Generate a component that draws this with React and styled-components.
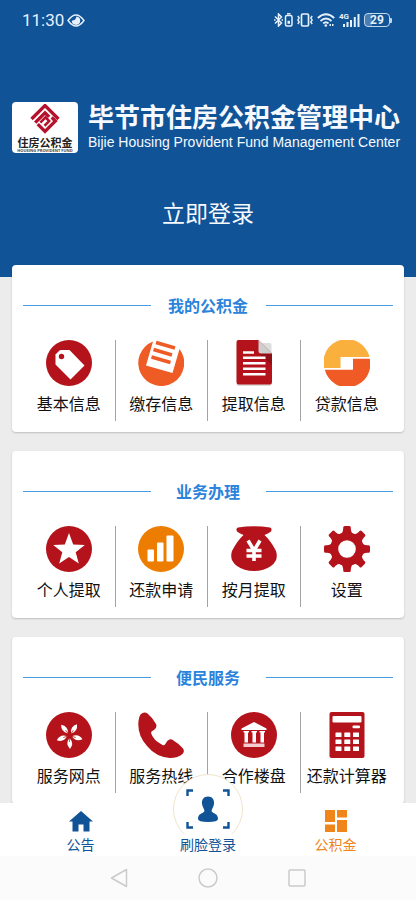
import React from "react";
import styled, { createGlobalStyle } from "styled-components";

const BLUE = "#105397";
const RED = "#b4131b";
const ORANGE = "#f08519";

const GlobalStyle = createGlobalStyle`
    * {
        box-sizing: border-box;
    }

    body {
        margin: 0;
        background: #ececec;
        font-family: "Noto Sans CJK SC", sans-serif;
        color: #111;
    }

    h1, h2, p {
        margin: 0;
    }

    button {
        border: 0;
        padding: 0;
        background: none;
        font: inherit;
        color: inherit;
        cursor: pointer;
    }

    svg {
        display: block;
        flex: none;
    }
`;

const Screen = styled.div`
    display: flex;
    flex-direction: column;
    height: 100vh;
`;

const Content = styled.main`
    flex: 1;
    min-height: 0;
    overflow-y: auto;
    scrollbar-width: none;
`;

const Hero = styled.header`
    display: flex;
    flex-direction: column;
    height: 277px;
    background: ${BLUE};
    color: #f6faff;
`;

const StatusBar = styled.div`
    display: flex;
    justify-content: space-between;
    align-items: center;
    height: 40px;
    padding: 0 24px 0 22px;
    color: #e6f1fb;
`;

const StatusGroup = styled.div`
    display: flex;
    align-items: center;
    gap: ${(props) => props.$gap}px;
`;

const Clock = styled.time`
    font: 400 17px/20px Roboto, sans-serif;
`;

const Network = styled.div`
    display: flex;
    align-items: flex-end;
`;

const NetworkType = styled.span`
    align-self: flex-start;
    margin-right: -6px;
    font: 700 8px/8px Roboto, sans-serif;
`;

const Battery = styled.span`
    display: flex;
    align-items: center;

    &::after {
        content: "";
        width: 2px;
        height: 5px;
        background: #c3d7ea;
        border-radius: 0 1px 1px 0;
    }
`;

const BatteryLevel = styled.span`
    width: 26px;
    border: 1px solid #c3d7ea;
    border-radius: 4px;
    background: linear-gradient(90deg, #4b7fb3 29%, transparent 29%);
    font: 700 12px/12px Roboto, sans-serif;
    text-align: center;
`;

const Brand = styled.div`
    display: flex;
    align-items: center;
    gap: 10px;
    margin: 61px 8px 0 12px;
`;

const Logo = styled.div`
    display: flex;
    flex-direction: column;
    align-items: center;
    flex: none;
    width: 66px;
    height: 51px;
    padding-top: 2px;
    border-radius: 4px;
    background: #fff;
`;

const LogoName = styled.span`
    margin-top: 2px;
    font-size: 11px;
    line-height: 12px;
    font-weight: 700;
    color: #222;
`;

const LogoCaption = styled.span`
    font: 700 4px/5px "Open Sans", sans-serif;
    color: #444;
    white-space: nowrap;
`;

const BrandText = styled.div`
    white-space: nowrap;
`;

const BrandName = styled.h1`
    font-size: 26px;
    line-height: 30px;
    font-weight: 700;
`;

const BrandEnglish = styled.p`
    font: 400 14px/22px "Liberation Sans", sans-serif;
`;

const LoginButton = styled.button`
    align-self: center;
    margin-top: 42px;
    font-size: 23px;
    line-height: 34px;
`;

const Cards = styled.div`
    display: flex;
    flex-direction: column;
    gap: 19px;
    margin-top: -12px;
    padding: 0 12px;
`;

const Card = styled.section`
    padding: 28px 11px 11px;
    border-radius: 4px;
    background: #fff;
    box-shadow: 0 1px 2px rgba(0, 0, 0, 0.2);
`;

const CardTitle = styled.h2`
    display: flex;
    align-items: center;
    font-size: 16px;
    line-height: 24px;
    font-weight: 700;
    color: #2b83dc;

    &::before,
    &::after {
        content: "";
        flex: 1;
        height: 1px;
        background: #4a9be0;
    }

    span {
        width: 115px;
        text-align: center;
    }
`;

const Services = styled.div`
    display: grid;
    grid-template-columns: repeat(4, 1fr);
    margin-top: 23px;
`;

const Service = styled.button`
    display: flex;
    flex-direction: column;
    align-items: center;
    gap: 5px;
    height: 81px;
    font-size: 16px;
    line-height: 24px;
    white-space: nowrap;

    &:not(:last-child) {
        border-right: 1px solid #a3a3a3;
    }
`;

const TabBar = styled.nav`
    position: relative;
    display: grid;
    grid-template-columns: 161px 1fr 161px;
    height: 53px;
    background: #fff;
`;

const Tab = styled.a`
    display: flex;
    flex-direction: column;
    align-items: center;
    justify-content: flex-end;
    gap: 2px;
    padding-bottom: 1px;
    font-size: 14px;
    line-height: 21px;
    text-decoration: none;
    color: ${(props) => (props.$active ? ORANGE : BLUE)};
`;

const TabLabel = styled.span`
    position: relative;
    background: #fff;
`;

// round button that rises above the bar
const FaceCircle = styled.span`
    position: absolute;
    left: 50%;
    bottom: 12px;
    display: flex;
    justify-content: center;
    width: 70px;
    height: 70px;
    margin-left: -35px;
    padding-top: 14px;
    border: 1px solid #efe3cc;
    border-radius: 50%;
    background: #fff;
`;

const SystemBar = styled.div`
    display: flex;
    justify-content: center;
    align-items: center;
    gap: 70px;
    height: 44px;
    background: #fbfbfb;
`;

const Disc = ({ fill = RED, children }) => (
    <svg width="46" height="46" viewBox="0 0 46 46">
        <circle cx="23" cy="23" r="23" fill={fill} />
        {children}
    </svg>
);

const TagIcon = () => (
    <Disc>
        <path
            d="M9.500 14.500L13.500 10.500Q14 10 15 10H23.500L38.500 25.500L24.500 39.500L9.500 24.500Z"
            fill="#fff"
        />
        <circle cx="15.500" cy="16.500" r="2.700" fill={RED} />
    </Disc>
);

const BillIcon = () => (
    <svg width="46" height="46" viewBox="0 0 46 46">
        <path
            d="M15 1.500A23 23 0 1 0 41.500 9L34.500 33L8 25.500Z"
            fill="#ef5b25"
        />
        <path
            d="M18 2.500L37 8M15.500 9.500L34 15M13.500 17L32.500 22.500"
            stroke="#ef5b25"
            strokeWidth="3.500"
        />
    </svg>
);

const DocumentIcon = () => (
    <svg width="46" height="46" viewBox="0 0 46 46">
        <rect x="5.500" y="3" width="35" height="43" rx="2" fill="#ddd" />
        <path d="M7 0H27.500L41 13.500V42Q41 44.500 39 44.500H7.500Q5.500 44.500 5.500 42V2Q5.500 0 7.500 0Z" fill={RED} />
        <path d="M28 13.500H41V25Z" fill="#8f1017" />
        <path d="M27.500 0V11Q27.500 13.500 30 13.500H41Z" fill="#cecece" />
        <path
            d="M12 12.500H23M12 17.800H34.500M12 23.300H34.500M12 28.800H34.500M12 34.300H34.500"
            stroke="#fff"
            strokeWidth="2.600"
        />
    </svg>
);

const LoanIcon = () => (
    <svg width="46" height="46" viewBox="0 0 46 46">
        <path d="M0 28A23 23 0 0 1 45.500 17H16.500V28Z" fill="#f9b03d" />
        <path d="M0.800 29.700H29V18.700H45.700A23 23 0 0 1 0.800 29.700Z" fill="#ef5a25" />
    </svg>
);

const StarIcon = () => (
    <Disc>
        <path
            d="M23 7L27.200 18.400L38.800 18.900L29.700 26.200L32.800 37.400L23 31L13.200 37.400L16.300 26.200L7.200 18.900L18.800 18.400Z"
            fill="#fff"
        />
    </Disc>
);

const ChartIcon = () => (
    <Disc fill="#ed7d00">
        <g fill="#fff">
            <rect x="9.500" y="23.500" width="6.500" height="12" rx="1" />
            <rect x="19" y="16.500" width="6.500" height="19" rx="1" />
            <rect x="28.500" y="9.500" width="7" height="26" rx="1" />
        </g>
    </Disc>
);

const MoneyBagIcon = () => (
    <svg width="46" height="46" viewBox="0 0 46 46">
        <path
            d="M7 1.500Q23 -1 39 1.500Q41.500 2.500 40 5.500Q38 7 33.500 9Q40 15 45 25Q48 34 40 40Q33 45 23 45Q13 45 6 40Q-2 34 1 25Q6 15 12.500 9Q8 7 6 5.500Q4.500 2.500 7 1.500Z"
            fill={RED}
        />
        <path
            d="M17 14.500L23 24.500L29 14.500M23 24V35M15.500 24.500H30.500M15.500 30H30.500"
            fill="none"
            stroke="#fff"
            strokeWidth="3.600"
        />
    </svg>
);

const GearIcon = () => (
    <svg width="46" height="46" viewBox="-23 -23 46 46">
        {[0, 45, 90, 135, 180, 225, 270, 315].map((angle) => (
            <path
                key={angle}
                d="M-6 -15Q-3.800 -17 -3.800 -20V-21.500Q-3.800 -23 -2.300 -23H2.300Q3.800 -23 3.800 -21.500V-20Q3.800 -17 6 -15Z"
                fill={RED}
                transform={`rotate(${angle})`}
            />
        ))}
        <circle r="12.800" fill="none" stroke={RED} strokeWidth="8" />
    </svg>
);

const FlowerIcon = () => (
    <Disc>
        {[36, 108, 180, 252, 324].map((angle) => (
            <g key={angle} transform={`translate(23.500 23.500) rotate(${angle})`}>
                <path d="M0 -2.500Q-5 -8 -0.500 -13.500Q4.500 -8 0 -2.500Z" fill="#fff" />
                <path d="M0 -2V-6.500" stroke={RED} strokeWidth="0.700" />
            </g>
        ))}
    </Disc>
);

const PhoneIcon = () => (
    <svg width="46" height="46" viewBox="0 0 46 46">
        <path
            d="M2.500 2.500Q6 -1 9.500 1.500Q15 6 18 12Q19.500 15.500 16 18Q13 19 13 21Q15 28 24.500 33Q26.500 34 28 31Q30.500 26.500 34 27.500Q40 31 45 36.500Q47 39.500 44.500 42Q40 46 32 46Q18 45 9 34Q-1 23 0.500 9Q1 4.500 2.500 2.500Z"
            fill={RED}
        />
    </svg>
);

const BuildingIcon = () => (
    <Disc>
        <path
            d="M23 10L35.500 16.500V18H10.500V16.500ZM12.500 19H18V20.500H17V30.500H13.500V20.500H12.500ZM20.500 19H26V20.500H25V30.500H21.500V20.500H20.500ZM28.500 19H34V20.500H33V30.500H29.500V20.500H28.500Z"
            fill="#fff"
        />
        <path d="M12.500 31.500H33.500V35H12.500Z" fill="#f3cdcf" />
    </Disc>
);

const CalculatorIcon = () => (
    <svg width="46" height="46" viewBox="0 0 46 46">
        <rect x="5.500" width="35" height="46" rx="2" fill={RED} />
        <g fill="#fff">
            <rect x="8.500" y="4" width="29" height="6.500" rx="1" />
            <rect x="28.500" y="13.500" width="7.500" height="2.700" rx="1" />
            {[20.500, 27.500, 34.500].map((y) =>
                [11.500, 20.300, 29].map((x) => (
                    <rect key={`${x}-${y}`} x={x} y={y} width="6" height="4.500" rx="0.500" />
                ))
            )}
        </g>
    </svg>
);

const FundMark = () => (
    <svg width="30" height="30" viewBox="0 0 29 29" fill="none" stroke="#b5102c" strokeWidth="3.200">
        <path d="M1.500 14.500L14.500 1.500L27.500 14.500" />
        <path d="M5 18L14.500 8.500L18.500 12.500" />
        <path d="M10 18L15 13L18.500 16.500L14 21" strokeWidth="2.500" />
        <path d="M7.500 19.500L14.500 26.500L24.500 16.500L21 13" />
    </svg>
);

const EyeIcon = () => (
    <svg width="18" height="13" viewBox="0 0 18 13">
        <path
            d="M1 6.500Q9 -4.500 17 6.500Q9 17.500 1 6.500Z"
            fill="none"
            stroke="currentColor"
            strokeWidth="1.400"
        />
        <path d="M9.500 2.500A4.200 4.200 0 1 1 4.800 6.500Q8.500 7 9.500 2.500Z" fill="currentColor" />
    </svg>
);

const BluetoothIcon = () => (
    <svg width="19" height="14" viewBox="0 0 19 14" fill="none" stroke="currentColor" strokeWidth="1.500">
        <path d="M1 3.500L7.500 10L4.500 13V1L7.500 4L1 10.500" />
        <path d="M0 7H1.500M7.500 7H9" />
        <rect x="11.500" y="2.500" width="6.500" height="10.500" rx="1.500" />
        <path d="M13 0.800H16.500" />
        <path d="M13.500 9.300H16" strokeWidth="3" />
    </svg>
);

const VibrateIcon = () => (
    <svg width="16" height="14" viewBox="0 0 16 14" fill="none" stroke="currentColor">
        <rect x="4.500" y="1" width="7" height="12" rx="1.200" strokeWidth="1.700" />
        <path d="M0.800 3L2.200 5L0.800 7L2.200 9L0.800 11M15.200 3L13.800 5L15.200 7L13.800 9L15.200 11" strokeWidth="1.400" />
    </svg>
);

const WifiIcon = () => (
    <svg width="18" height="14" viewBox="0 0 18 14" fill="none" stroke="currentColor" strokeWidth="1.800">
        <path d="M0.800 5Q9 -2.500 17.200 5M3.500 8Q9 3 14.500 8M6.200 10.500Q9 8 11.500 10.500" />
        <circle cx="8.800" cy="12.500" r="1.300" fill="currentColor" stroke="none" />
        <path d="M12.500 12H14M15 12H16.500" strokeWidth="2" />
    </svg>
);

const SignalIcon = () => (
    <svg width="17" height="14" viewBox="0 0 17 14" stroke="currentColor" strokeWidth="2">
        <path d="M1 11V14M4.500 9V14M8 7V14M11.800 4V14M15.500 1V14" />
    </svg>
);

const HomeIcon = () => (
    <svg width="24" height="21" viewBox="0 0 24 21" fill={BLUE}>
        <path d="M12 0L24 10.500H20.500V20.500H14.500V13.500H9.500V20.500H3.500V10.500H0Z" />
    </svg>
);

const FaceIcon = () => (
    <svg width="44" height="40" viewBox="0 0 44 40" fill={BLUE}>
        <path
            d="M1.500 7V1.500H7M37 1.500H42.500V7M42.500 33V38.500H37M7 38.500H1.500V33"
            fill="none"
            stroke={BLUE}
            strokeWidth="2.400"
        />
        <path d="M22 7.500C26.500 7.500 28.500 11 28 15C27.500 18 26 19.500 25.500 22C27 25 32 24 32 30Q32 33 22 33Q12 33 12 30C12 24 17 25 18.500 22C18 19.500 16.500 18 16 15C15.500 11 17.500 7.500 22 7.500Z" />
    </svg>
);

const TilesIcon = () => (
    <svg width="22" height="22" viewBox="0 0 22 22" fill={ORANGE}>
        <path d="M0 0H10V12H0ZM12 0H22V7.500H12ZM0 14.500H10V22H0ZM12 10H22V22H12Z" />
    </svg>
);

const sections = [
    {
        title: "我的公积金",
        services: [
            { name: "基本信息", Icon: TagIcon },
            { name: "缴存信息", Icon: BillIcon },
            { name: "提取信息", Icon: DocumentIcon },
            { name: "贷款信息", Icon: LoanIcon },
        ],
    },
    {
        title: "业务办理",
        services: [
            { name: "个人提取", Icon: StarIcon },
            { name: "还款申请", Icon: ChartIcon },
            { name: "按月提取", Icon: MoneyBagIcon },
            { name: "设置", Icon: GearIcon },
        ],
    },
    {
        title: "便民服务",
        services: [
            { name: "服务网点", Icon: FlowerIcon },
            { name: "服务热线", Icon: PhoneIcon },
            { name: "合作楼盘", Icon: BuildingIcon },
            { name: "还款计算器", Icon: CalculatorIcon },
        ],
    },
];

const App = () => {
    return (
        <Screen>
            <GlobalStyle />
            <Content>
                <Hero>
                    <StatusBar>
                        <StatusGroup $gap={3}>
                            <Clock>11:30</Clock>
                            <EyeIcon />
                        </StatusGroup>
                        <StatusGroup $gap={4}>
                            <BluetoothIcon />
                            <VibrateIcon />
                            <WifiIcon />
                            <Network>
                                <NetworkType>4G</NetworkType>
                                <SignalIcon />
                            </Network>
                            <Battery>
                                <BatteryLevel>29</BatteryLevel>
                            </Battery>
                        </StatusGroup>
                    </StatusBar>
                    <Brand>
                        <Logo>
                            <FundMark />
                            <LogoName>住房公积金</LogoName>
                            <LogoCaption>HOUSING PROVIDENT FUND</LogoCaption>
                        </Logo>
                        <BrandText>
                            <BrandName>毕节市住房公积金管理中心</BrandName>
                            <BrandEnglish>Bijie Housing Provident Fund Management Center</BrandEnglish>
                        </BrandText>
                    </Brand>
                    <LoginButton type="button">立即登录</LoginButton>
                </Hero>
                <Cards>
                    {sections.map(({ title, services }) => (
                        <Card key={title}>
                            <CardTitle>
                                <span>{title}</span>
                            </CardTitle>
                            <Services>
                                {services.map(({ name, Icon }) => (
                                    <Service key={name} type="button">
                                        <Icon />
                                        {name}
                                    </Service>
                                ))}
                            </Services>
                        </Card>
                    ))}
                </Cards>
            </Content>
            <TabBar>
                <Tab href="#notice">
                    <HomeIcon />
                    <TabLabel>公告</TabLabel>
                </Tab>
                <Tab href="#face-login">
                    <FaceCircle>
                        <FaceIcon />
                    </FaceCircle>
                    <TabLabel>刷脸登录</TabLabel>
                </Tab>
                <Tab href="#fund" $active>
                    <TilesIcon />
                    <TabLabel>公积金</TabLabel>
                </Tab>
            </TabBar>
            <SystemBar>
                <svg width="18" height="20" viewBox="0 0 18 20" fill="none" stroke="#cbcbcb" strokeWidth="1.500">
                    <path d="M16.500 1.500V18.500L1.500 10Z" strokeLinejoin="round" />
                </svg>
                <svg width="20" height="20" viewBox="0 0 20 20" fill="none" stroke="#cbcbcb" strokeWidth="1.500">
                    <circle cx="10" cy="10" r="9" />
                </svg>
                <svg width="18" height="18" viewBox="0 0 18 18" fill="none" stroke="#cbcbcb" strokeWidth="1.500">
                    <rect x="1" y="1" width="16" height="16" rx="1" />
                </svg>
            </SystemBar>
        </Screen>
    );
};

export default App;
